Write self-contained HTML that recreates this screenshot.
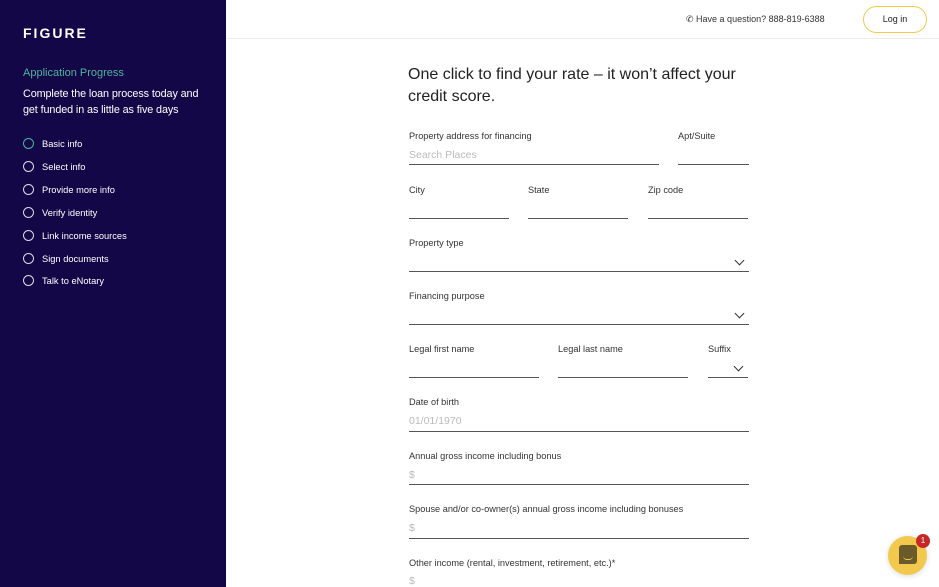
<!DOCTYPE html>
<html><head><meta charset="utf-8"><style>
*{margin:0;padding:0;box-sizing:border-box}
body{width:939px;height:587px;overflow:hidden;font-family:"Liberation Sans",sans-serif;background:#fff;position:relative}
.side{position:absolute;left:0;top:0;width:226px;height:587px;background:#140747;color:#fff}
.logo{position:absolute;left:23px;top:25px;font-size:14px;font-weight:bold;letter-spacing:2px}
.ap{position:absolute;left:23px;top:67px;font-size:11px;color:#4fb39d}
.cp{position:absolute;left:23px;top:86px;font-size:10.8px;line-height:16px;width:182px;letter-spacing:-0.1px}
.st{position:absolute;left:23px;font-size:9.3px}
.st i{position:absolute;left:0;top:-1px;width:11px;height:11px;border:1.3px solid #ddd;border-radius:50%}
.st span{position:absolute;left:19px;top:0;white-space:nowrap}
.top{position:absolute;left:226px;top:0;right:0;height:39px;border-bottom:1px solid #eee}
.q{position:absolute;left:686px;top:14px;font-size:9px;color:#333}
.login{position:absolute;left:863px;top:6px;width:64px;height:27px;border:1.5px solid #f2c94c;border-radius:14px;font-size:9px;text-align:center;line-height:24px;color:#222}
h1{position:absolute;left:408px;top:64px;font-size:16px;font-weight:normal;line-height:22px;color:#222;width:350px}
.l{position:absolute;font-size:9.2px;color:#333}
.f{position:absolute;border-bottom:1px solid #555;height:1px}
.ph{position:absolute;font-size:10.5px;color:#bbb}
.ch{position:absolute;width:7px;height:7px;border-right:1.3px solid #333;border-bottom:1.3px solid #333;transform:rotate(45deg)}
</style></head><body>
<div class="side">
<div class="logo">FIGURE</div>
<div class="ap">Application Progress</div>
<div class="cp">Complete the loan process today and get funded in as little as five days</div>
<div class="st" style="top:139px"><i style="border-color:#4fb39d"></i><span>Basic info</span></div>
<div class="st" style="top:162px"><i></i><span>Select info</span></div>
<div class="st" style="top:185px"><i></i><span>Provide more info</span></div>
<div class="st" style="top:208px"><i></i><span>Verify identity</span></div>
<div class="st" style="top:231px"><i></i><span>Link income sources</span></div>
<div class="st" style="top:254px"><i></i><span>Sign documents</span></div>
<div class="st" style="top:276px"><i></i><span>Talk to eNotary</span></div>
</div>
<div class="top"></div>
<div class="q">✆ Have a question? 888-819-6388</div>
<div class="login">Log in</div>
<h1>One click to find your rate – it won’t affect your credit score.</h1>
<div class="l" style="left:409px;top:131px">Property address for financing</div>
<div class="l" style="left:678px;top:131px">Apt/Suite</div>
<div class="ph" style="left:409px;top:149px">Search Places</div>
<div class="f" style="left:409px;top:164px;width:250px"></div>
<div class="f" style="left:678px;top:164px;width:71px"></div>
<div class="l" style="left:409px;top:185px">City</div>
<div class="l" style="left:528px;top:185px">State</div>
<div class="l" style="left:648px;top:185px">Zip code</div>
<div class="f" style="left:409px;top:218px;width:100px"></div>
<div class="f" style="left:528px;top:218px;width:100px"></div>
<div class="f" style="left:648px;top:218px;width:100px"></div>
<div class="l" style="left:409px;top:238px">Property type</div>
<div class="ch" style="left:736px;top:257px"></div>
<div class="f" style="left:409px;top:271px;width:340px"></div>
<div class="l" style="left:409px;top:291px">Financing purpose</div>
<div class="ch" style="left:736px;top:310px"></div>
<div class="f" style="left:409px;top:324px;width:340px"></div>
<div class="l" style="left:409px;top:344px">Legal first name</div>
<div class="l" style="left:558px;top:344px">Legal last name</div>
<div class="l" style="left:708px;top:344px">Suffix</div>
<div class="ch" style="left:735px;top:363px"></div>
<div class="f" style="left:409px;top:377px;width:130px"></div>
<div class="f" style="left:558px;top:377px;width:130px"></div>
<div class="f" style="left:708px;top:377px;width:40px"></div>
<div class="l" style="left:409px;top:397px">Date of birth</div>
<div class="ph" style="left:409px;top:415px">01/01/1970</div>
<div class="f" style="left:409px;top:431px;width:340px"></div>
<div class="l" style="left:409px;top:451px">Annual gross income including bonus</div>
<div class="ph" style="left:409px;top:469px">$</div>
<div class="f" style="left:409px;top:484px;width:340px"></div>
<div class="l" style="left:409px;top:504px">Spouse and/or co-owner(s) annual gross income including bonuses</div>
<div class="ph" style="left:409px;top:522px">$</div>
<div class="f" style="left:409px;top:538px;width:340px"></div>
<div class="l" style="left:409px;top:558px">Other income (rental, investment, retirement, etc.)*</div>
<div class="ph" style="left:409px;top:575px">$</div>
<div style="position:absolute;left:888px;top:536px;width:39px;height:39px;border-radius:50%;background:#f2c94c;box-shadow:0 1px 6px rgba(0,0,0,.15)"></div>
<div style="position:absolute;left:899px;top:545px;width:18px;height:19px;background:#6b5a2a;border-radius:3px 3px 3px 0"></div>
<div style="position:absolute;left:903px;top:556px;width:10px;height:4px;border-bottom:1.3px solid #f2c94c;border-radius:0 0 5px 5px"></div>
<div style="position:absolute;left:916px;top:534px;width:14px;height:14px;border-radius:50%;background:#c62828;color:#fff;font-size:8px;text-align:center;line-height:14px">1</div>
</body></html>
